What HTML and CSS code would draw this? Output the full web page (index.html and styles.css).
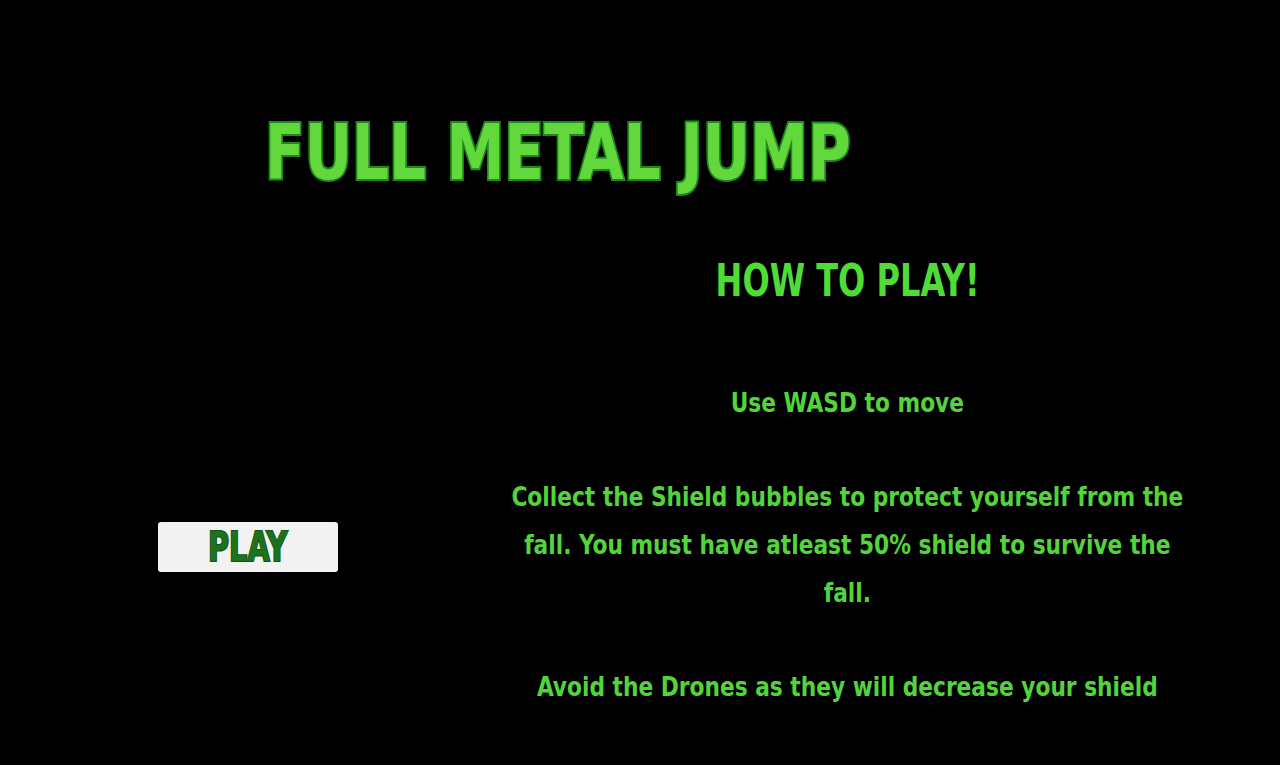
FILE: index.html
```html
<!DOCTYPE html>
<html>
<head>
<meta charset="utf-8">
<link rel="stylesheet" href="styles.css">
</head>
<body>
<div class="page">
  <h1 class="title"><span class="narrow-title">FULL METAL JUMP</span></h1>
  <div class="content">
    <div class="left">
      <button class="play"><span class="narrow-play">PLAY</span></button>
    </div>
    <div class="right">
      <h2 class="howto">HOW TO PLAY!</h2>
      <p class="line first">Use WASD to move</p>
      <p class="line">Collect the Shield bubbles to protect yourself from the fall. You must have atleast 50% shield to survive the fall.</p>
      <p class="line">Avoid the Drones as they will decrease your shield</p>
    </div>
  </div>
</div>
</body>
</html>
```

FILE: styles.css
```css
html, body {
  margin: 0;
  padding: 0;
  background: #000;
  height: 100%;
}
.page {
  width: 1280px;
  height: 765px;
  overflow: hidden;
  font-family: "DejaVu Sans Condensed", "DejaVu Sans", sans-serif;
  font-stretch: condensed;
}
.title {
  margin: 0;
  padding: 103px 0 0 265px;
  font-size: 77px;
  font-weight: 700;
  line-height: 100px;
  color: #62d83c;
  -webkit-text-stroke: 4px #1c8a1c;
  paint-order: stroke fill;
  white-space: nowrap;
}
.narrow-title {
  display: inline-block;
  transform: scaleX(0.84);
  transform-origin: left center;
}
.content {
  display: grid;
  grid-template-columns: 505px 685px;
}
.left {
  padding: 319px 0 0 158px;
}
.play {
  width: 180px;
  height: 50px;
  background: #f2f2f2;
  border: none;
  border-radius: 3px;
  font-family: inherit;
  font-weight: 700;
  font-size: 40px;
  color: #1d721d;
  -webkit-text-stroke: 2px #0e5412;
  paint-order: stroke fill;
  padding: 0;
  line-height: 50px;
  text-align: center;
}
.narrow-play {
  display: inline-block;
  transform: scaleX(0.8);
}
.right {
  color: #52d43a;
  font-weight: 700;
}
.howto {
  width: 846px;
  margin: 48px 0 0;
  font-size: 44px;
  line-height: 60px;
  font-weight: 700;
  text-align: center;
  transform: scaleX(0.81);
  transform-origin: left top;
  color: #4fdc36;
}
.line {
  width: 765px;
  margin: 0;
  font-size: 27px;
  line-height: 48px;
  text-align: center;
  transform: scaleX(0.895);
  transform-origin: left top;
}
.line.first {
  margin-top: 68px;
  margin-bottom: 46px;
}
.line + .line {
  margin-bottom: 46px;
}
```
